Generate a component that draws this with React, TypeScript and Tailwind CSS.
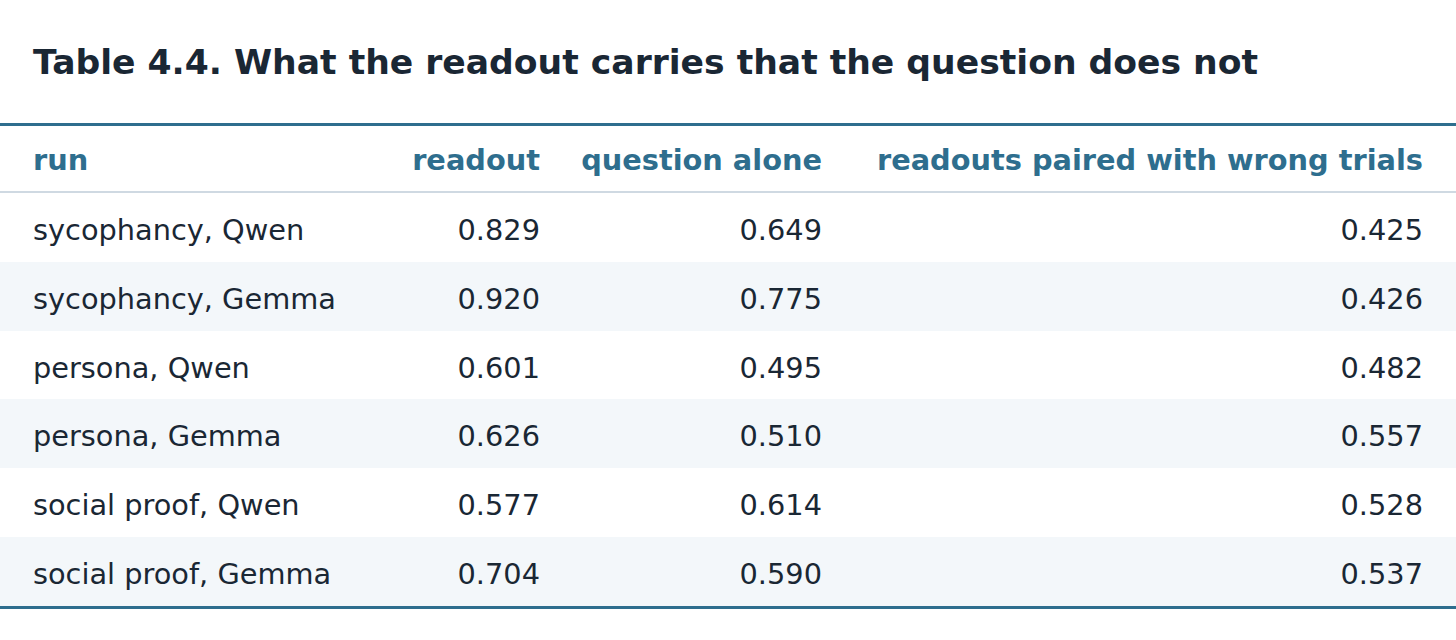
import React from "react";

const rows: [string, string, string, string][] = [
  ["sycophancy, Qwen", "0.829", "0.649", "0.425"],
  ["sycophancy, Gemma", "0.920", "0.775", "0.426"],
  ["persona, Qwen", "0.601", "0.495", "0.482"],
  ["persona, Gemma", "0.626", "0.510", "0.557"],
  ["social proof, Qwen", "0.577", "0.614", "0.528"],
  ["social proof, Gemma", "0.704", "0.590", "0.537"],
];

const grid = "grid grid-cols-[337px_170px_282px_601px] px-[33px] items-center";

export default function App() {
  return (
    <div
      className="w-[1456px] h-[640px] bg-white text-[#1a2734]"
      style={{ fontFamily: '"DejaVu Sans", sans-serif' }}
    >
      <h1 className="pt-[40px] px-[33px] text-[34.6px] leading-[44px] font-bold text-[#1a2734] whitespace-nowrap">
        Table 4.4. What the readout carries that the question does not
      </h1>
      <div className="mt-[39px] border-t-[3px] border-b-[3px] border-[#2e6e8e]">
        <div className={`${grid} h-[67px] pt-[3px] border-b-2 border-[#cfd9e2] text-[28.8px] leading-none font-bold text-[#2e6e8e]`}>
          <div>run</div>
          <div className="text-right">readout</div>
          <div className="text-right">question alone</div>
          <div className="text-right whitespace-nowrap">readouts paired with wrong trials</div>
        </div>
        {rows.map((r, i) => (
          <div
            key={i}
            className={`${grid} h-[68.8px] pt-[6px] text-[28.8px] leading-none ${i % 2 === 1 ? "bg-[#f3f7fa]" : "bg-white"}`}
          >
            <div>{r[0]}</div>
            <div className="text-right">{r[1]}</div>
            <div className="text-right">{r[2]}</div>
            <div className="text-right">{r[3]}</div>
          </div>
        ))}
      </div>
    </div>
  );
}
